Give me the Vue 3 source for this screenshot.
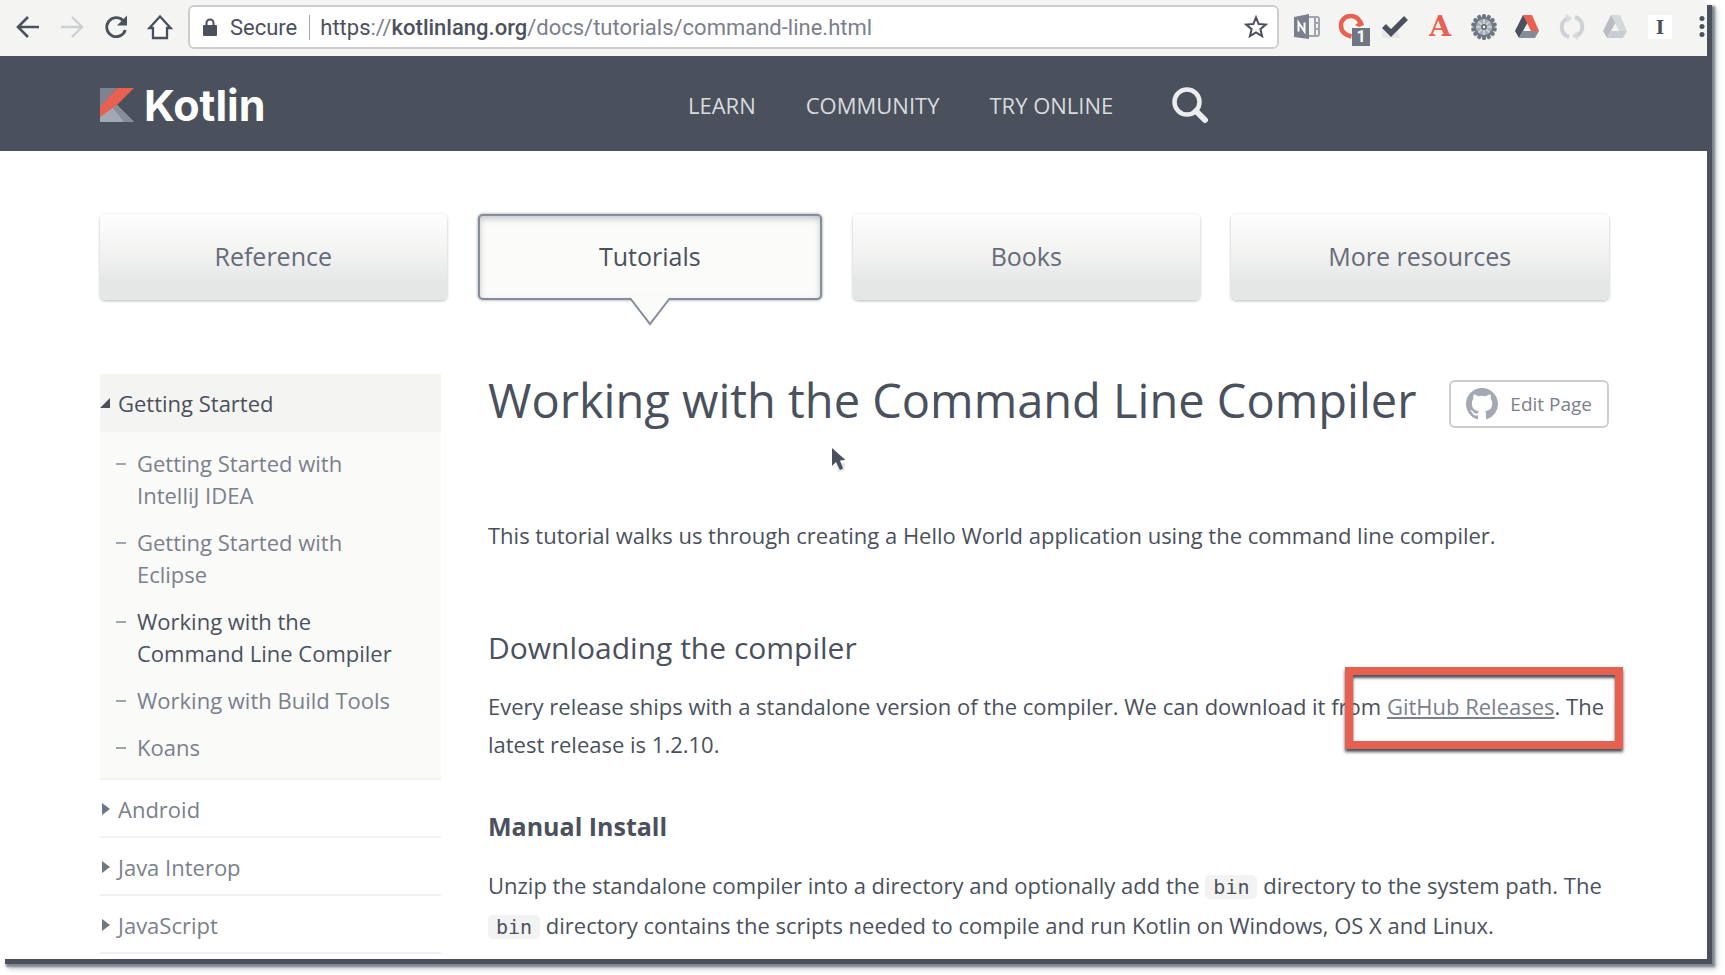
<script setup>
const tabs = [
  { label: 'Reference' },
  { label: 'Tutorials', active: true },
  { label: 'Books' },
  { label: 'More resources' },
]
const lessons = [
  { label: 'Getting Started with IntelliJ IDEA' },
  { label: 'Getting Started with Eclipse' },
  { label: 'Working with the Command Line Compiler', active: true },
  { label: 'Working with Build Tools' },
  { label: 'Koans' },
]
const sections = ['Android', 'Java Interop', 'JavaScript']
const gearTeeth = Array.from({ length: 14 }, (_, i) => (i * 360) / 14)
</script>

<template>
  <div class="window">
    <div class="toolbar">
      <div class="nav-buttons">
        <button aria-label="Back">
          <svg width="26" height="26" viewBox="0 0 26 26"><path d="M24 13H4M13 3 3 13l10 10" fill="none" stroke="#4a515d" stroke-width="2.6" /></svg>
        </button>
        <button aria-label="Forward">
          <svg width="26" height="26" viewBox="0 0 26 26"><path d="M2 13h20M13 3l10 10-10 10" fill="none" stroke="#ccd0d2" stroke-width="2.4" /></svg>
        </button>
        <button aria-label="Reload">
          <svg width="26" height="26" viewBox="0 0 26 26"><path d="M20 6.500A9.500 9.500 0 1 0 22.300 16" fill="none" stroke="#4a515d" stroke-width="2.800" /><path d="M24 1.500v10H14z" fill="#4a515d" /></svg>
        </button>
        <button aria-label="Home">
          <svg width="26" height="26" viewBox="0 0 26 26"><path d="M13 2.500 2.500 14H6v10h14V14h3.500z" fill="#fff" stroke="#4a515d" stroke-width="2.300" /></svg>
        </button>
      </div>
      <div class="address">
        <svg width="14" height="18" viewBox="0 0 14 18"><path d="M3.500 8V5a3.500 3.500 0 0 1 7 0v3" fill="none" stroke="#4a515d" stroke-width="2" /><rect y="7" width="14" height="11" rx="1" fill="#4a515d" /></svg>
        <span class="secure">Secure</span>
        <span class="url"><span class="scheme">https</span>://<b>kotlinlang.org</b>/docs/tutorials/command-line.html</span>
        <button aria-label="Bookmark">
          <svg width="26" height="26" viewBox="0 0 26 26"><path d="m13 3.500 2.700 6.600 7.100.5-5.400 4.600 1.700 7-6.100-3.800-6.100 3.800 1.700-7-5.400-4.600 7.100-.5z" fill="#fff" stroke="#4a515d" stroke-width="2" /></svg>
        </button>
      </div>
      <div class="extensions">
        <button aria-label="OneNote">
          <svg width="28" height="28" viewBox="0 0 28 28"><path d="M15 4h8a2 2 0 0 1 2 2v15a2 2 0 0 1-2 2h-8" fill="#f4f4f3" stroke="#9fa4ae" stroke-width="2" /><path d="M21 4v19M21 10h4M21 16h4" stroke="#9fa4ae" stroke-width="2" /><path d="M0 4 15 1v25L0 24z" fill="#7a808c" /><path d="M4.500 18.500v-9l6 9v-9" fill="none" stroke="#fff" stroke-width="2" /></svg>
        </button>
        <button aria-label="Blocked items: 1" class="badged">
          <svg width="28" height="28" viewBox="0 0 28 28"><path d="M13.500 23.500C7 22 3 18 3 12.500 3 7 7.500 3 12.500 3c5 0 8 2.500 9.500 6" fill="none" stroke="#e8604f" stroke-width="4.500" /><path d="m17 12 7-5 2 5-5 2z" fill="#e8604f" /></svg>
          <span class="badge">1</span>
        </button>
        <button aria-label="Tasks">
          <svg width="28" height="28" viewBox="0 0 28 28"><path d="M0 15h15l3 10H0z" fill="#e6e7e7" /><path d="m2 13 7 7L24 5" fill="none" stroke="#4a515d" stroke-width="5.500" /></svg>
        </button>
        <button aria-label="Fonts" class="letter-a">A</button>
        <button aria-label="Settings">
          <svg width="28" height="28" viewBox="0 0 28 28"><g v-for="a in gearTeeth" :key="a" :transform="`rotate(${a} 14 14)`"><rect x="12" y="1" width="4" height="6" rx="1.500" fill="#6f7683" /></g><circle cx="14" cy="14" r="9" fill="#a6acb5" stroke="#6f7683" stroke-width="2" /><path d="M14 6v16M6 14h16M8.500 8.500l11 11M19.500 8.500l-11 11" stroke="#d4d7da" stroke-width="1.500" /><circle cx="14" cy="14" r="3" fill="#656c78" /><circle cx="14" cy="14" r="1.200" fill="#fff" /></svg>
        </button>
        <button aria-label="Drive">
          <svg width="28" height="28" viewBox="0 0 28 28"><path d="m9 2-8 16 4 7 9-16z" fill="#4a515d" /><path d="M9 2h9l7 16h-8z" fill="#e8604f" /><path d="M9 18h16l-4 7H5z" fill="#858c99" /></svg>
        </button>
        <button aria-label="Sync">
          <svg width="28" height="28" viewBox="0 0 28 28"><path d="M11 24C2 21 1 9 10 5M17 4c9 3 10 15 1 19" fill="none" stroke="#cfd2d4" stroke-width="4" /><path d="m8 1 6 4-5 5zM20 27l-6-4 5-5z" fill="#d9dbdc" /></svg>
        </button>
        <button aria-label="Save to Drive">
          <svg width="28" height="28" viewBox="0 0 28 28"><path d="m9 2-8 16 4 7 9-16z" fill="#b9bdc3" /><path d="M9 2h9l7 16h-8z" fill="#d6d9da" /><path d="M9 18h16l-4 7H5z" fill="#c9ccd0" /></svg>
        </button>
        <button aria-label="Instapaper" class="letter-i"><span>I</span></button>
      </div>
      <button aria-label="Menu" class="menu">
        <svg width="6" height="24" viewBox="0 0 6 24"><circle cx="3" cy="3.500" r="2.500" fill="#4a515d" /><circle cx="3" cy="11.500" r="2.500" fill="#4a515d" /><circle cx="3" cy="19.500" r="2.500" fill="#4a515d" /></svg>
      </button>
    </div>

    <header class="site-header">
      <a href="#" class="logo">
        <svg width="34" height="34" viewBox="0 0 34 34"><path d="M0 0h17L0 20z" fill="#7d8490" /><path d="M17 0h17L0 34V19z" fill="#e8604f" /><path d="M0 29 17 17l17 17H0z" fill="#a2a8b4" /><path d="m17 17 17 17H24L13 20z" fill="#878e9a" /></svg>
        <span>Kotlin</span>
      </a>
      <nav class="site-nav">
        <a href="#">LEARN</a>
        <a href="#">COMMUNITY</a>
        <a href="#">TRY ONLINE</a>
        <button aria-label="Search">
          <svg width="38" height="38" viewBox="0 0 38 38"><circle cx="16" cy="16" r="12.500" fill="none" stroke="#eceded" stroke-width="4.500" /><path d="m25 25 9 9" stroke="#eceded" stroke-width="6" stroke-linecap="round" /></svg>
        </button>
      </nav>
    </header>

    <nav class="tabs" aria-label="Documentation">
      <a v-for="t in tabs" :key="t.label" href="#" class="tab" :class="{ active: t.active }">
        {{ t.label }}
        <svg v-if="t.active" class="pointer" width="42" height="30" viewBox="0 0 42 30"><path d="M1 0h40v3L21 28 1 3z" fill="#fbfbfa" /><path d="m1 2 20 26L41 2" fill="none" stroke="#858d9a" stroke-width="2" /></svg>
      </a>
    </nav>

    <div class="content">
      <aside class="sidebar">
        <a href="#" class="section open">
          <svg width="10" height="10" viewBox="0 0 10 10"><path d="M10 0v10H0z" fill="#4a515d" /></svg>
          Getting Started
        </a>
        <ul class="lessons">
          <li v-for="l in lessons" :key="l.label" :class="{ active: l.active }">
            <a href="#">{{ l.label }}</a>
          </li>
        </ul>
        <a v-for="s in sections" :key="s" href="#" class="section">
          <svg width="10" height="12" viewBox="0 0 10 12"><path d="m2 0 8 6-8 6z" fill="#6f7683" /></svg>
          {{ s }}
        </a>
      </aside>

      <main class="article">
        <div class="title-row">
          <h1>Working with the Command Line Compiler</h1>
          <button class="edit">
            <svg width="32" height="32" viewBox="0 0 16 16"><path fill="#a3a9b3" d="M8 0C3.580 0 0 3.580 0 8c0 3.540 2.290 6.530 5.470 7.590.4.070.55-.17.55-.38 0-.19-.01-.82-.01-1.490-2.010.37-2.530-.49-2.690-.94-.09-.23-.48-.94-.82-1.130-.28-.15-.68-.52-.01-.53.63-.01 1.080.58 1.230.82.72 1.210 1.870.87 2.330.66.07-.52.28-.87.51-1.070-1.780-.2-3.640-.89-3.640-3.950 0-.87.31-1.590.82-2.150-.08-.2-.36-1.020.08-2.120 0 0 .67-.21 2.200.82.64-.18 1.320-.27 2-.27s1.360.09 2 .27c1.530-1.040 2.200-.82 2.200-.82.44 1.100.16 1.920.08 2.120.51.56.82 1.270.82 2.150 0 3.070-1.870 3.750-3.650 3.950.29.25.54.73.54 1.480 0 1.070-.01 1.930-.01 2.200 0 .21.15.46.55.38A8.010 8.010 0 0 0 16 8c0-4.420-3.580-8-8-8z" /></svg>
            Edit Page
          </button>
          <svg class="cursor" width="18" height="26" viewBox="0 0 18 26"><path d="M5 16h9l-1 8-6 1z" fill="#e3e4e5" /><path d="M1 1v18l4-4 4 8 3-1.500-3-8 5.500-.5z" fill="#4a515d" /></svg>
        </div>
        <p class="intro">This tutorial walks us through creating a Hello World application using the command line compiler.</p>
        <h2>Downloading the compiler</h2>
        <div class="download">
          <p>
            Every release ships with a standalone version of the compiler. We can download it from
            <a href="#">GitHub Releases</a>. The latest release is 1.2.10.
          </p>
          <div class="highlight"></div>
        </div>
        <h3>Manual Install</h3>
        <p class="steps">
          Unzip the standalone compiler into a directory and optionally add the <code>bin</code> directory to the system path. The <code>bin</code> directory contains the scripts needed to compile and run Kotlin on Windows, OS X and Linux.
        </p>
      </main>
    </div>
  </div>
</template>

<style>
body {
  background: #fff;
}
</style>

<style scoped>
* {
  box-sizing: border-box;
}
.window {
  margin: 0 18px 16px 0;
  min-height: calc(100vh - 16px);
  background: #fff;
  font-family: "Open Sans", "Noto Sans", sans-serif;
  color: #4a515d;
  box-shadow: 5px 5px 0 #4a515d, 7px 7px 2px 1px #7f8590, 9px 9px 5px 1px #c9ccd0;
}
a {
  color: inherit;
  text-decoration: none;
}
button {
  padding: 0;
  border: 0;
  background: none;
  font: inherit;
  color: inherit;
}
svg {
  display: block;
  flex: none;
}
.toolbar {
  display: flex;
  align-items: center;
  height: 56px;
  padding: 0 0 2px 15px;
  background: #f4f4f3;
  font-family: Roboto, sans-serif;
}
.nav-buttons {
  display: flex;
  gap: 18px;
  margin-right: 15px;
}
.address {
  flex: 1;
  display: flex;
  align-items: center;
  height: 44px;
  padding: 0 8px 0 13px;
  border: 2px solid #cbcecf;
  border-radius: 6px;
  background: #fff;
  font-size: 22px;
}
.secure {
  margin: 0 10px 0 13px;
  padding-right: 12px;
  border-right: 1px solid #9ea3ad;
}
.url {
  flex: 1;
  color: #7a808c;
}
.url b {
  font-weight: 500;
  color: #4a515d;
}
.scheme {
  color: #4a515d;
}
.extensions {
  display: flex;
  gap: 16px;
  margin-left: 15px;
}
.extensions button {
  width: 28px;
  height: 28px;
}
.badged {
  position: relative;
}
.badge {
  position: absolute;
  left: 14px;
  top: 15px;
  width: 18px;
  height: 18px;
  background: #6f7683;
  color: #fff;
  font-size: 16px;
  font-weight: 700;
  line-height: 18px;
}
.extensions .letter-a {
  font: 700 28px/28px "DejaVu Serif", serif;
  color: #e8604f;
}
.letter-i span {
  display: block;
  margin: 2px;
  background: #fff;
  font: 700 22px/24px "Liberation Serif", serif;
}
.menu {
  margin-left: 25px;
  margin-right: 2px;
}
.site-header {
  display: flex;
  align-items: center;
  height: 95px;
  padding: 3px 0 0 100px;
  background: #4a515d;
}
.logo {
  display: flex;
  align-items: center;
  gap: 10px;
  width: 588px;
  color: #fff;
  font: 700 43px/60px Inter, sans-serif;
}
.site-nav {
  display: flex;
  align-items: center;
  gap: 50px;
  color: #d9dbde;
  font-size: 22px;
}
.site-nav button {
  margin-left: 8px;
}
.tabs {
  display: grid;
  grid-template-columns: 347fr 345fr 347fr 379fr;
  gap: 31px;
  padding: 63px 98px 68px 100px;
}
.tab {
  position: relative;
  height: 86px;
  border-radius: 5px;
  background: linear-gradient(#fefefe, #f4f4f3 40%, #e5e7e7 80%);
  box-shadow: 0 1px 3px #b4b8bb;
  color: #656c78;
  font-size: 25px;
  line-height: 84px;
  text-align: center;
}
.tab.active {
  border: 2px solid #858d9a;
  background: #fbfbfa;
  box-shadow: inset 0 3px 6px #c4c8cc, 0 0 3px #858d9a;
  color: #4a515d;
  line-height: 80px;
}
.pointer {
  position: absolute;
  left: calc(50% - 21px);
  top: 80px;
}
.content {
  display: grid;
  grid-template-columns: 341px 1fr;
  gap: 47px;
  padding: 0 98px 0 100px;
}
.sidebar {
  margin-top: 6px;
  font-size: 22px;
}
.section {
  display: flex;
  align-items: center;
  gap: 8px;
  height: 58px;
  padding-top: 2px;
  border-bottom: 2px solid #f1f1f1;
  color: #7a808c;
}
.section.open {
  border-color: #f4f4f3;
  background: #f4f4f3;
  color: #4a515d;
}
.lessons {
  display: flex;
  flex-direction: column;
  gap: 15px;
  margin: 0;
  padding: 15px 40px 15px 37px;
  border-bottom: 2px solid #f1f1f1;
  background: #fafaf9;
  color: #7a808c;
  line-height: 32px;
  list-style: none;
}
.lessons li {
  position: relative;
}
.lessons li::before {
  content: "";
  position: absolute;
  left: -21px;
  top: 16px;
  width: 10px;
  height: 2px;
  background: #a0a6b1;
}
.lessons .active {
  color: #4a515d;
}
.title-row {
  position: relative;
  display: flex;
  justify-content: space-between;
  align-items: flex-start;
}
h1, h2, h3, p {
  margin: 0;
}
h1 {
  font-size: 47px;
  font-weight: 400;
  line-height: 64px;
}
.edit {
  display: flex;
  align-items: center;
  gap: 12px;
  height: 48px;
  margin-top: 12px;
  padding: 0 15px;
  border: 2px solid #cbcecf;
  border-radius: 6px;
  color: #7a808c;
  font-size: 19px;
  white-space: nowrap;
}
.cursor {
  position: absolute;
  left: 343px;
  top: 79px;
}
p {
  font-size: 22px;
  line-height: 38px;
}
.intro {
  margin-top: 84px;
}
h2 {
  margin: 74px 0 19px;
  font-size: 30px;
  font-weight: 400;
  line-height: 40px;
}
.download {
  position: relative;
}
.download a {
  color: #7a808c;
  text-decoration: underline;
}
.highlight {
  position: absolute;
  right: -14px;
  top: -20px;
  width: 278px;
  height: 82px;
  border: 8px solid #e8604f;
  box-shadow: 0 3px 3px #4a515d, inset 0 3px 3px #4a515d;
}
h3 {
  margin: 46px 0 22px;
  font-size: 25px;
  font-weight: 700;
  line-height: 34px;
}
.steps {
  line-height: 40px;
}
code {
  padding: 0 8px;
  border-radius: 5px;
  background: #f3f3f2;
  font-family: "DejaVu Sans Mono", monospace;
  font-size: 20px;
  line-height: 20px;
}
</style>
